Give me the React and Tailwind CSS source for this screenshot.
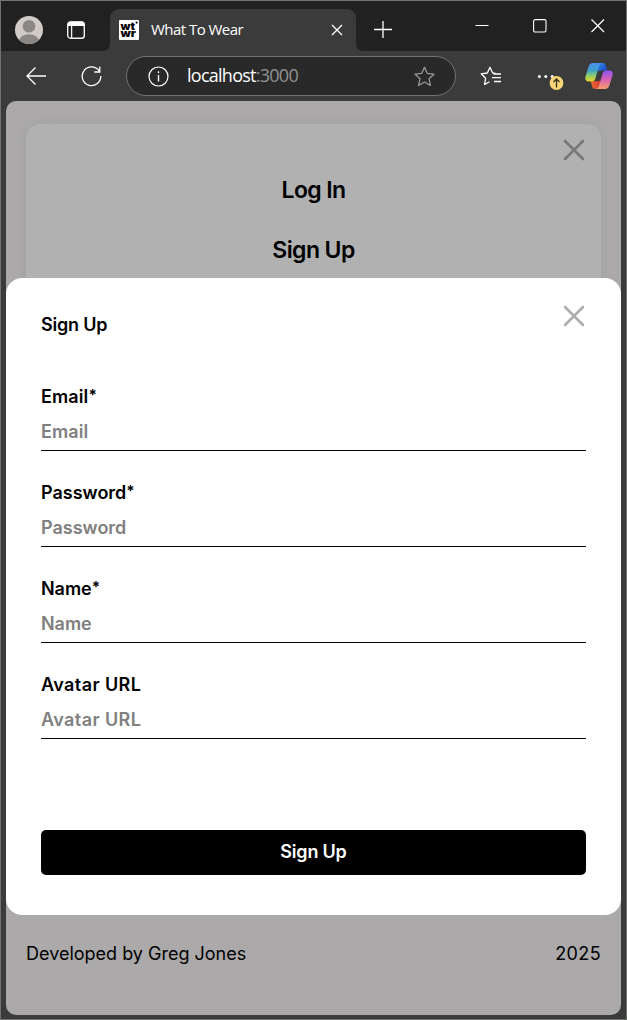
import React from 'react';

function PanelIcon() {
  return (
    <svg width="20" height="20" viewBox="0 0 20 20" fill="none">
      <rect x="1.7" y="2" width="16.6" height="16.2" rx="2.8" stroke="#f2f2f2" strokeWidth="1.4" />
      <path d="M1.5 6V4.5A3 3 0 0 1 4.500 1.500H15.500A3 3 0 0 1 18.500 4.500V6Z" fill="#fff" />
      <path d="M5.600 6V18" stroke="#f2f2f2" strokeWidth="1.3" />
    </svg>
  );
}

function Avatar() {
  return (
    <svg width="28" height="28" viewBox="0 0 28 28">
      <clipPath id="avatar">
        <circle cx="14" cy="14" r="14" />
      </clipPath>
      <g clipPath="url(#avatar)">
        <rect width="28" height="28" fill="#d1cbc8" />
        <circle cx="14" cy="10.300" r="6.300" fill="#8a8683" />
        <ellipse cx="14" cy="25.500" rx="10" ry="7.300" fill="#8a8683" />
      </g>
    </svg>
  );
}

function Copilot() {
  return (
    <svg width="28" height="26" viewBox="0 0 28 26">
      <defs>
        <linearGradient id="cpl" x1="0" y1="0" x2="0" y2="1">
          <stop offset="0" stopColor="#4b8fee" />
          <stop offset=".4" stopColor="#3fa3c8" />
          <stop offset=".7" stopColor="#8fcf6a" />
          <stop offset="1" stopColor="#f5d323" />
        </linearGradient>
        <linearGradient id="cpr" x1="0" y1="0" x2="0" y2="1">
          <stop offset="0" stopColor="#8b52f4" />
          <stop offset=".5" stopColor="#d963b0" />
          <stop offset="1" stopColor="#f7a06a" />
        </linearGradient>
        <linearGradient id="cpt" x1="0" y1="0" x2="1" y2="1">
          <stop offset="0" stopColor="#2f8be8" />
          <stop offset="1" stopColor="#1b3fc4" />
        </linearGradient>
        <linearGradient id="cpb" x1="0" y1="0" x2="1" y2="0">
          <stop offset="0" stopColor="#ee6a36" />
          <stop offset="1" stopColor="#d8402f" />
        </linearGradient>
      </defs>
      <path d="M13 0H17.500C19.500 0 20.500 1.300 21 3L22.300 7.500H18C16 7.500 15 7.500 13 8.500Z" fill="url(#cpt)" />
      <path d="M15 26H10.500C8.500 26 7.500 24.700 7 23L5.700 18.300H10C12 18.300 13 18.300 15 17.500Z" fill="url(#cpb)" />
      <path d="M8 0H17.500C15.500 0 14.500 2 13.800 4L10.500 15C9.900 17 9 18.500 7 18.500H3.500C.7 18.500-.2 16.500.5 13.500L3.500 4C4.300 1.500 5.500 0 8 0Z" fill="url(#cpl)" />
      <path d="M20 26H10.500C12.500 26 13.500 24 14.200 22L17.500 11C18.100 9 19 7.500 21 7.500H24.500C27.300 7.500 28.200 9.500 27.500 12.500L24.500 22C23.700 24.500 22.500 26 20 26Z" fill="url(#cpr)" />
    </svg>
  );
}

function TabStrip() {
  return (
    <div className="flex h-[50px] shrink-0 bg-[#212121] text-white">
      <div className="flex w-[109px] items-center gap-[23px] pt-[7px] pl-3.5">
        <Avatar />
        <PanelIcon />
      </div>
      <div className="mt-2 flex h-[42px] w-[246px] items-center rounded-t-[9px] bg-[#3b3b3b] pl-[9px]">
        <svg className="-ml-[17px] self-end" width="8" height="8" viewBox="0 0 8 8">
          <path d="M8 0V8H0Q8 8 8 0Z" fill="#3b3b3b" />
        </svg>
        <svg className="ml-[9px]" width="20" height="20" viewBox="0 0 20 20">
          <rect width="20" height="20" rx="1" fill="#fff" />
          <g fontFamily="Inter, sans-serif" fontSize="10" fontWeight="900">
            <text x="1.500" y="9.600" textLength="14.500" lengthAdjust="spacingAndGlyphs">wt</text>
            <text x="1.500" y="17.400" textLength="15.500" lengthAdjust="spacingAndGlyphs">wr</text>
          </g>
          <circle cx="17.600" cy="2.600" r="1.100" />
        </svg>
        <span className="ml-3 w-[180px] pb-0.5 text-[15px] leading-5 tracking-[-0.540px]">What To Wear</span>
        <svg width="12" height="12" viewBox="0 0 12 12" stroke="#fff" strokeWidth="1.300">
          <path d="M1 1L11 11M11 1L1 11" />
        </svg>
        <svg className="-mr-2 ml-auto self-end" width="8" height="8" viewBox="0 0 8 8">
          <path d="M0 0V8H8Q0 8 0 0Z" fill="#3b3b3b" />
        </svg>
      </div>
      <svg className="mt-5 ml-[18px]" width="18" height="18" viewBox="0 0 18 18" stroke="#fff" strokeWidth="1.300">
        <path d="M0 8.500H18M9 0V17" />
      </svg>
      <div className="ml-auto flex gap-11 pt-[18px] pr-[21px]">
        <svg width="14" height="14" viewBox="0 0 14 14" stroke="#fff">
          <path d="M.5 6.500H13.500" />
        </svg>
        <svg width="14" height="14" viewBox="0 0 14 14" fill="none" stroke="#fff" strokeWidth="1.100">
          <rect x=".6" y=".6" width="12.400" height="12.400" rx="1.500" />
        </svg>
        <svg width="14" height="14" viewBox="0 0 14 14" stroke="#fff" strokeWidth="1.200">
          <path d="M.5.5L13 13M13 .5L.5 13" />
        </svg>
      </div>
    </div>
  );
}

const star = 'M10 1.300L12.700 7L19 7.800L14.300 12.100L15.600 18.500L10 15.300L4.400 18.500L5.700 12.100L1 7.800L7.300 7Z';

function Toolbar() {
  return (
    <div className="flex h-[50px] shrink-0 items-center pl-[25px] text-white">
      <svg width="20" height="18" viewBox="0 0 20 18" fill="none" stroke="#fff" strokeWidth="1.300">
        <path d="M20 9H1M9.500.5L1 9L9.500 17.500" />
      </svg>
      <svg className="ml-[35px]" width="21" height="21" viewBox="0 0 21 21" fill="none" stroke="#fff" strokeWidth="1.300">
        <path d="M18.500 5.500A9.300 9.300 0 1 0 19.800 10M18.800 .5V6H13.300" />
      </svg>
      <div className="ml-6 flex h-10 w-[330px] items-center rounded-full border border-[#737373] bg-[#292929] pl-[21px]">
        <svg width="21" height="21" viewBox="0 0 21 21" fill="none" stroke="#fff" strokeWidth="1.200">
          <circle cx="10.500" cy="10.500" r="9.500" />
          <path d="M10.500 9V15.500" strokeWidth="1.400" />
          <circle cx="10.500" cy="6.200" r=".6" fill="#fff" strokeWidth=".6" />
        </svg>
        <span className="ml-[18px] w-[227px] pb-0.5 text-[18px] leading-6 tracking-[-0.740px]">
          localhost<span className="text-[#929292]">:3000</span>
        </span>
        <svg width="21" height="21" viewBox="0 0 20 20" fill="none" stroke="#999" strokeWidth="1.200" strokeLinejoin="round">
          <path d={star} />
        </svg>
      </div>
      <svg className="ml-6" width="22" height="20" viewBox="0 0 22 20" fill="none" stroke="#fff" strokeWidth="1.300" strokeLinejoin="round">
        <path d="M9.500 15.700L4.600 18.500L5.600 12.300L1.200 7.800L7.300 7L10 1.300L12.700 7L15.500 7.400" />
        <path d="M13.500 8H21M12 11.700H21M14 15.500H21" />
      </svg>
      <svg className="mt-1.5 ml-[35px]" width="28" height="24" viewBox="0 0 28 24">
        <g fill="#fff">
          <circle cx="2.400" cy="9.500" r="1.500" />
          <circle cx="8.800" cy="9.500" r="1.500" />
          <circle cx="15.200" cy="9.500" r="1.500" />
        </g>
        <circle cx="19.500" cy="16" r="6.900" fill="#f7d574" />
        <path d="M19.500 20.500V12M16.500 15L19.500 12L22.500 15" fill="none" stroke="#302b18" strokeWidth="1.300" />
      </svg>
      <div className="ml-[20px]">
        <Copilot />
      </div>
    </div>
  );
}

function CloseButton({ className }) {
  return (
    <button type="button" aria-label="Close" className={'absolute ' + className}>
      <svg width="22" height="22" viewBox="0 0 22 22" stroke="currentColor" strokeWidth="2.600" strokeLinecap="round">
        <path d="M2 2L20 20M20 2L2 20" />
      </svg>
    </button>
  );
}

function Field({ label, required, placeholder, tracking, type = 'text' }) {
  return (
    <label className="flex h-24 flex-col text-[18px] leading-[22px] font-semibold">
      <span className={tracking}>
        {label}
        {required && <span className="relative -top-[3px] text-[15px] leading-none font-bold">*</span>}
      </span>
      <input
        type={type}
        placeholder={placeholder}
        className={'mt-2.5 h-[33px] border-b border-black pb-1.5 outline-none placeholder:text-[#808080] ' + tracking}
      />
    </label>
  );
}

function SignUpForm() {
  return (
    <form className="absolute inset-x-0 top-[177px] flex h-[637px] flex-col rounded-2xl bg-white px-[35px] pt-9">
      <CloseButton className="top-[27px] right-9 text-[#adadad]" />
      <h2 className="text-[18px] leading-[22px] font-semibold tracking-[-0.200px]">Sign Up</h2>
      <div className="mt-[50px] flex flex-col">
        <Field label="Email" required placeholder="Email" tracking="tracking-[0.100px]" />
        <Field label="Password" required placeholder="Password" tracking="tracking-[0px]" type="password" />
        <Field label="Name" required placeholder="Name" tracking="tracking-[-0.050px]" />
        <Field label="Avatar URL" placeholder="Avatar URL" tracking="tracking-[0.400px]" />
      </div>
      <button type="button" className="mt-[60px] h-[45px] shrink-0 rounded-[5px] bg-black pb-0.5 text-[18px] font-semibold tracking-[-0.200px] text-white">
        Sign Up
      </button>
    </form>
  );
}

export default function App() {
  return (
    <div className="flex h-[1020px] w-[627px] flex-col overflow-hidden border border-[#707270] bg-[#3b3b3b] font-['Open_Sans',sans-serif]">
      <TabStrip />
      <Toolbar />
      <main className="relative mx-[5px] flex h-[914px] shrink-0 flex-col overflow-hidden rounded-[10px] bg-[#aba9a9] px-5 font-['Inter',sans-serif] text-black">
        <nav className="relative mt-[23px] flex h-[300px] flex-col items-center gap-[30px] rounded-[14px] bg-[#b1b1b1] pt-[51px] text-[23px] leading-[30px] font-semibold tracking-[-0.600px] shadow-[0_0_12px_rgba(0,0,0,0.060)]">
          <CloseButton className="top-[15px] right-4 text-[#777]" />
          <a>Log In</a>
          <a>Sign Up</a>
        </nav>
        <SignUpForm />
        <footer className="mt-auto mb-[50px] flex justify-between text-[18px] leading-[22px]">
          <span>Developed by Greg Jones</span>
          <span className="tracking-[0.400px]">2025</span>
        </footer>
      </main>
    </div>
  );
}
